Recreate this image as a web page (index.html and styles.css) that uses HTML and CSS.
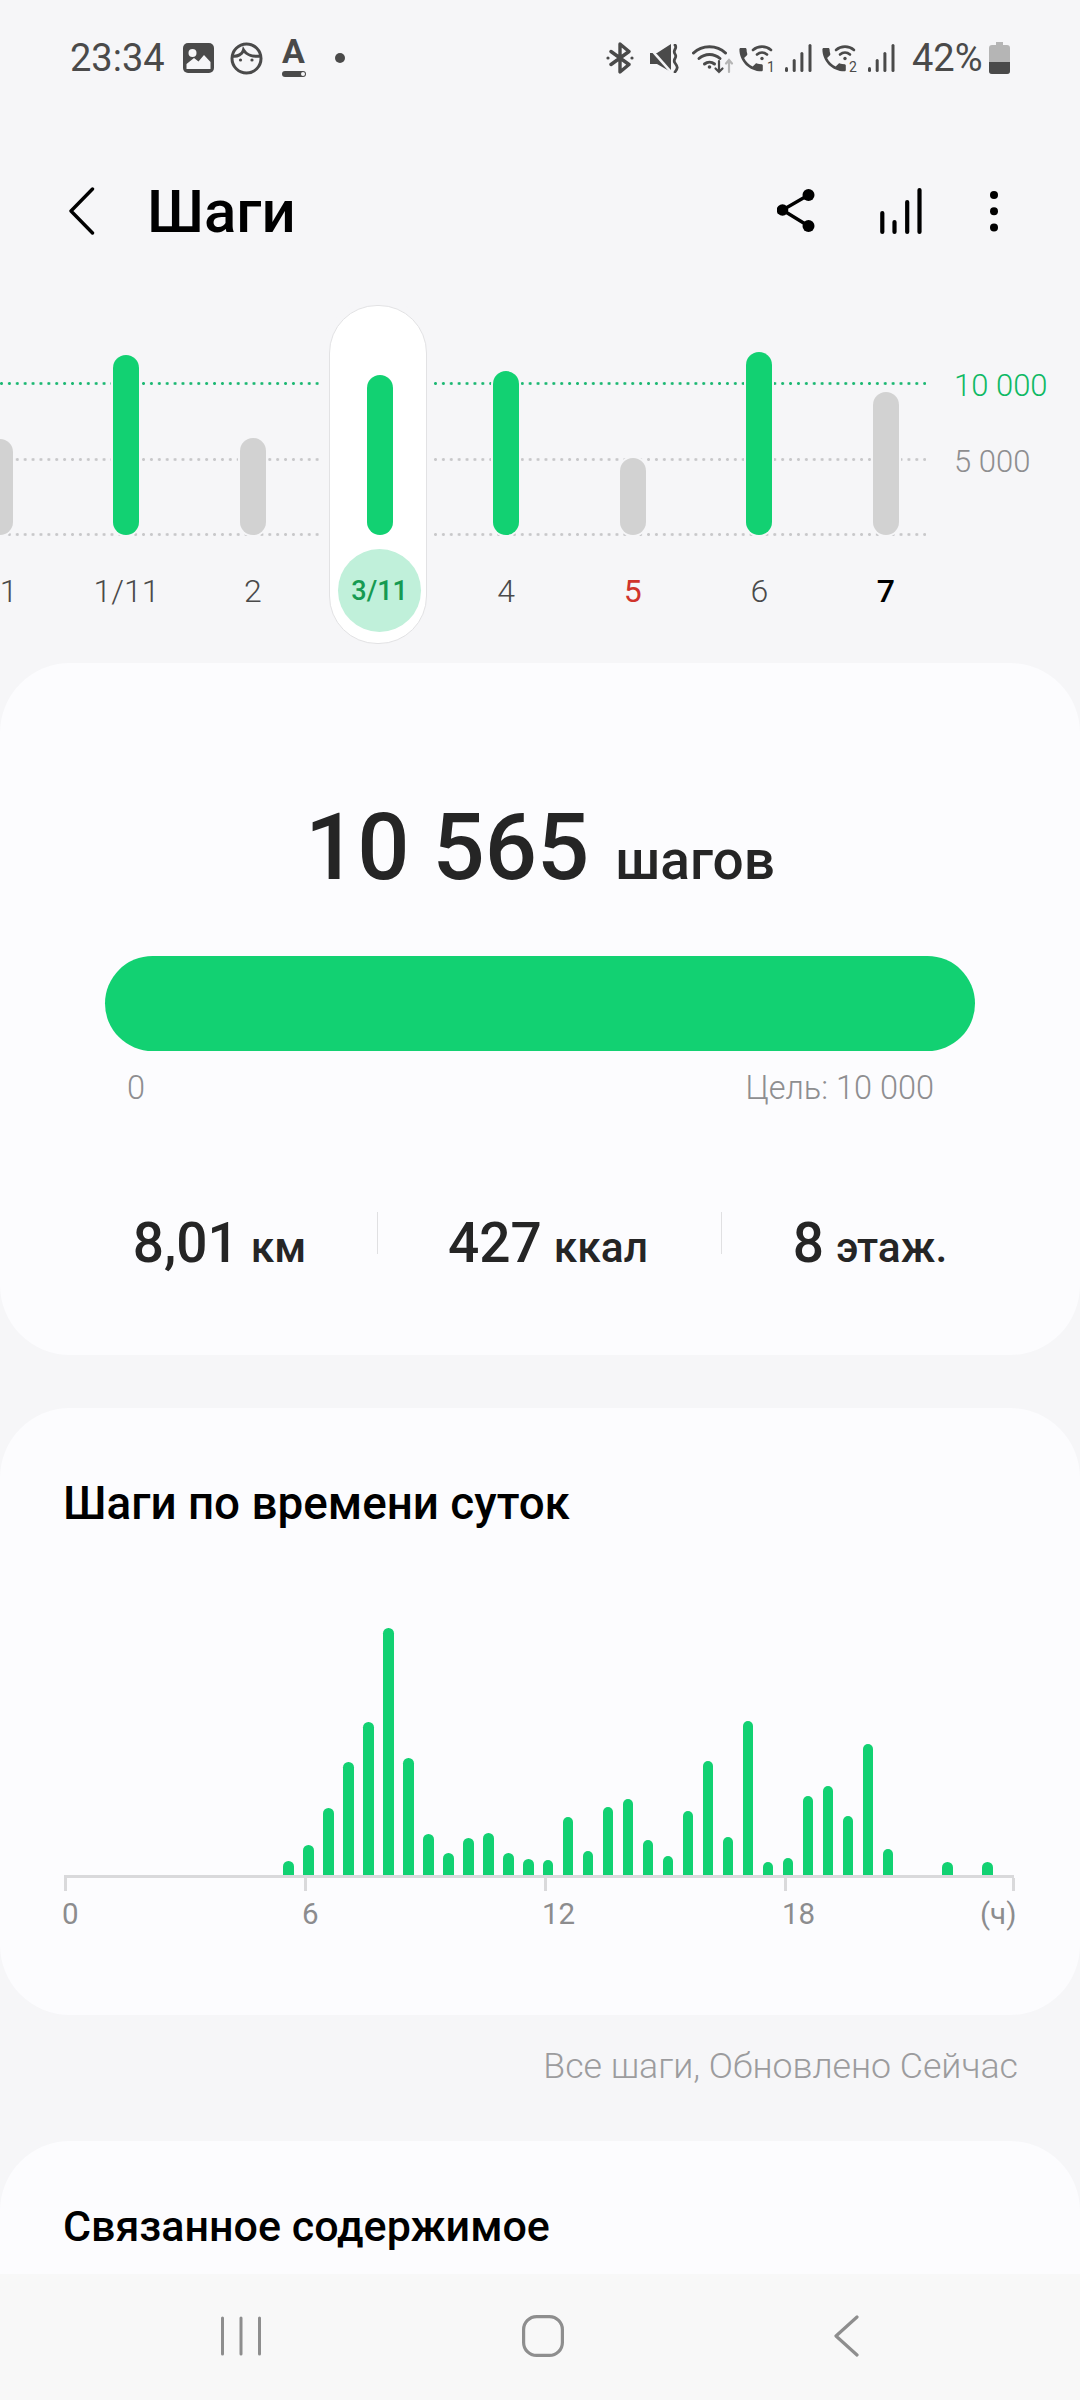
FILE: index.html
```html
<!DOCTYPE html>
<html lang="ru">
<head>
<meta charset="utf-8">
<title>Шаги</title>
<link rel="stylesheet" href="styles.css">
</head>
<body>
<div class="screen">
  <div class="main">
    <div class="status">
      <div class="status-left">
        <span class="time">23:34</span>
        <svg class="ic-img" viewBox="0 0 31 30"><rect width="31" height="30" rx="5" fill="#4a4a4a"/><circle cx="9.5" cy="10" r="4" fill="#f6f6f8"/><path d="M3.5 26v-5L11 15l4.5 3.5L21 12l6.5 7v7z" fill="#f6f6f8"/></svg>
        <svg class="ic-face" viewBox="0 0 33 33" fill="none" stroke="#4a4a4a" stroke-width="3"><circle cx="16.5" cy="16.5" r="14.5"/><path d="M2.5 14c5 1 10-2 11-6 3 5 10 7 17 6"/><circle cx="10.5" cy="18" r="1.6" fill="#4a4a4a" stroke="none"/><circle cx="22" cy="18" r="1.6" fill="#4a4a4a" stroke="none"/></svg>
        <span class="font-ic"><span class="font-a">A</span><span class="font-bar"></span></span>
        <span class="dot"></span>
      </div>
      <div class="status-right">
        <svg class="ic-bt" viewBox="0 0 28 32" fill="none" stroke="#4a4a4a" stroke-width="3.4" stroke-linejoin="round" stroke-linecap="round"><path d="M5 9.500l18 13-9 7.500V2l9 7.500-18 13"/><circle cx="2" cy="16" r="1.600" fill="#4a4a4a" stroke="none"/><circle cx="26" cy="16" r="1.600" fill="#4a4a4a" stroke="none"/></svg>
        <svg class="ic-mute" viewBox="0 0 30 29"><path d="M1 9h7l14-9v28L8 20H1z" fill="#4a4a4a"/><path d="M0 3l23 26" stroke="#f6f6f8" stroke-width="2.600" fill="none"/><path d="M26 1c3 3.500-3 5 0 9s-3 5 0 9 3 5 0 9" stroke="#4a4a4a" stroke-width="2.800" fill="none" stroke-linecap="round"/></svg>
        <svg class="ic-wifi" viewBox="0 0 42 31" fill="none" stroke="#4a4a4a" stroke-width="3" stroke-linecap="round"><path d="M1.500 10C10 1.500 25 1.500 33.500 10"/><path d="M7 15.500c6-5.500 15-5.500 21 0"/><path d="M12.500 21c3-2.500 7-2.500 10 0"/><circle cx="17.500" cy="24" r="1.800" fill="#4a4a4a" stroke="none"/><path d="M27 18v11m-3.500-3.500l3.500 3.500 3.500-3.500" stroke-width="2.200"/><path d="M37 29V17m-3 3.500l3-3.500 3 3.500" stroke="#b5b5b5" stroke-width="2.200"/></svg>
        <svg class="ic-call" viewBox="0 0 36 29"><path transform="translate(-3.500 0) scale(1.300)" fill="#4a4a4a" d="M6.620 10.790c1.440 2.830 3.760 5.140 6.590 6.590l2.200-2.200c.27-.27.67-.36 1.020-.24 1.120.37 2.330.57 3.570.57.55 0 1 .45 1 1V20c0 .55-.45 1-1 1-9.390 0-17-7.610-17-17 0-.55.45-1 1-1h3.500c.55 0 1 .45 1 1 0 1.250.2 2.450.57 3.570.11.35.03.74-.25 1.020l-2.200 2.200z"/><g fill="none" stroke="#4a4a4a" stroke-width="2.600" stroke-linecap="round"><path d="M14 6c5-4.500 13-4.500 18 0"/><path d="M18 10.500c3-2.500 7-2.500 10 0"/></g><circle cx="23" cy="14.500" r="1.700" fill="#4a4a4a"/><text class="sim" x="28" y="28">1</text></svg>
        <svg class="ic-sig" viewBox="0 0 27 28" fill="#4a4a4a"><rect x="0" y="23" width="3" height="5" rx="1.500"/><rect x="7.700" y="15" width="3" height="13" rx="1.500"/><rect x="15.400" y="8" width="3" height="20" rx="1.500"/><rect x="23.500" y="0" width="3" height="28" rx="1.500"/></svg>
        <svg class="ic-call ic-call2" viewBox="0 0 36 29"><path transform="translate(-3.500 0) scale(1.300)" fill="#4a4a4a" d="M6.620 10.790c1.440 2.830 3.760 5.140 6.590 6.590l2.200-2.200c.27-.27.67-.36 1.020-.24 1.120.37 2.330.57 3.570.57.55 0 1 .45 1 1V20c0 .55-.45 1-1 1-9.390 0-17-7.610-17-17 0-.55.45-1 1-1h3.500c.55 0 1 .45 1 1 0 1.250.2 2.450.57 3.570.11.35.03.74-.25 1.020l-2.200 2.200z"/><g fill="none" stroke="#4a4a4a" stroke-width="2.600" stroke-linecap="round"><path d="M14 6c5-4.500 13-4.500 18 0"/><path d="M18 10.500c3-2.500 7-2.500 10 0"/></g><circle cx="23" cy="14.500" r="1.700" fill="#4a4a4a"/><text class="sim" x="27" y="28">2</text></svg>
        <svg class="ic-sig" viewBox="0 0 27 28" fill="#4a4a4a"><rect x="0" y="23" width="3" height="5" rx="1.500"/><rect x="7.700" y="15" width="3" height="13" rx="1.500"/><rect x="15.400" y="8" width="3" height="20" rx="1.500"/><rect x="23.500" y="0" width="3" height="28" rx="1.500"/></svg>
        <span class="batt-text">42%</span>
        <svg class="ic-batt" viewBox="0 0 21 32"><path d="M7 0h7v3h4a3 3 0 0 1 3 3v23a3 3 0 0 1-3 3H3a3 3 0 0 1-3-3V6a3 3 0 0 1 3-3h4z" fill="#b5b5b5"/><path d="M0 20h21v9a3 3 0 0 1-3 3H3a3 3 0 0 1-3-3z" fill="#4a4a4a"/></svg>
      </div>
    </div>

    <header class="appbar">
      <svg class="back" viewBox="0 0 26 48" fill="none" stroke="#000" stroke-width="3.400" stroke-linecap="round" stroke-linejoin="round"><path d="M23.500 2L2 24l21.500 22"/></svg>
      <h1 class="title">Шаги</h1>
      <svg class="ic-share" viewBox="0 0 38 44" fill="#000"><path d="M31.500 6L5.500 21l26 16" fill="none" stroke="#000" stroke-width="3.400"/><circle cx="31.500" cy="6" r="6"/><circle cx="5.500" cy="21" r="5.800"/><circle cx="31.500" cy="37" r="6"/></svg>
      <svg class="ic-stats" viewBox="0 0 42 48" fill="none" stroke="#000" stroke-width="4.200" stroke-linecap="round"><path d="M2.300 45V26M14.500 45V35M27.200 45V15M39.500 45V3"/></svg>
      <svg class="ic-more" viewBox="0 0 10 42" fill="#000"><circle cx="5" cy="5" r="4"/><circle cx="5" cy="21.300" r="4"/><circle cx="5" cy="37.600" r="4"/></svg>
    </header>

    <section class="trend">
      <div class="gridlines">
        <div class="gl gl-goal"><span class="gl-line"></span><span class="gl-label">10 000</span></div>
        <div class="gl"><span class="gl-line"></span><span class="gl-label">5 000</span></div>
        <div class="gl"><span class="gl-line"></span></div>
      </div>
      <div class="days">
        <div class="day"><div class="plot"><i class="dbar off" style="height:96px"></i></div><div class="dlabel">31</div></div>
        <div class="day"><div class="plot"><i class="dbar" style="height:180px"></i></div><div class="dlabel">1/11</div></div>
        <div class="day"><div class="plot"><i class="dbar off" style="height:97px"></i></div><div class="dlabel">2</div></div>
        <div class="day sel"><div class="plot"><i class="dbar" style="height:160px"></i></div><div class="dlabel">3/11</div></div>
        <div class="day"><div class="plot"><i class="dbar" style="height:164px"></i></div><div class="dlabel">4</div></div>
        <div class="day"><div class="plot"><i class="dbar off" style="height:77px"></i></div><div class="dlabel red">5</div></div>
        <div class="day"><div class="plot"><i class="dbar" style="height:183px"></i></div><div class="dlabel">6</div></div>
        <div class="day"><div class="plot"><i class="dbar off" style="height:143px"></i></div><div class="dlabel today">7</div></div>
      </div>
    </section>

    <section class="card card-steps">
      <div class="count"><span class="count-num">10 565</span><span class="count-unit">шагов</span></div>
      <div class="progress"></div>
      <div class="progress-labels"><span>0</span><span>Цель: 10 000</span></div>
      <div class="stats">
        <div class="stat"><b>8,01</b><span>км</span></div>
        <div class="stat stat-div"><b>427</b><span>ккал</span></div>
        <div class="stat stat-div"><b>8</b><span>этаж.</span></div>
      </div>
    </section>

    <section class="card card-hours">
      <h2 class="card-title">Шаги по времени суток</h2>
      <div class="hbars">
        <i style="height:14px"></i><i style="height:30px"></i><i style="height:67px"></i><i style="height:113px"></i><i style="height:153px"></i><i style="height:247px"></i><i style="height:117px"></i><i style="height:41px"></i><i style="height:22px"></i><i style="height:37px"></i><i style="height:42px"></i><i style="height:22px"></i><i style="height:16px"></i><i style="height:15px"></i><i style="height:58px"></i><i style="height:24px"></i><i style="height:68px"></i><i style="height:76px"></i><i style="height:35px"></i><i style="height:19px"></i><i style="height:64px"></i><i style="height:114px"></i><i style="height:38px"></i><i style="height:154px"></i><i style="height:13px"></i><i style="height:17px"></i><i style="height:79px"></i><i style="height:89px"></i><i style="height:59px"></i><i style="height:131px"></i><i style="height:26px"></i><i style="height:0"></i><i style="height:0"></i><i style="height:13px"></i><i style="height:0"></i><i style="height:13px"></i>
      </div>
      <div class="axis"><span class="tick"></span><span class="tick"></span><span class="tick"></span><span class="tick"></span><span class="tick tick-end"></span></div>
      <div class="axis-labels"><span>0</span><span>6</span><span>12</span><span>18</span><span class="unit">(ч)</span></div>
    </section>

    <p class="updated">Все шаги, Обновлено Сейчас</p>

    <section class="card card-related">
      <h2 class="card-title card-title-small">Связанное содержимое</h2>
    </section>
  </div>

  <nav class="navbar">
    <svg class="nav-recent" viewBox="0 0 42 40" fill="none" stroke="#8e8e8e" stroke-width="3" stroke-linecap="round"><path d="M2.500 2v36M21 2v36M39.500 2v36"/></svg>
    <svg class="nav-home" viewBox="0 0 42 42" fill="none" stroke="#8e8e8e" stroke-width="3.200"><rect x="1.600" y="1.600" width="38.800" height="38.800" rx="13"/></svg>
    <svg class="nav-back" viewBox="0 0 25 42" fill="none" stroke="#8e8e8e" stroke-width="3.200" stroke-linecap="round" stroke-linejoin="round"><path d="M23 2L2 21l21 19"/></svg>
  </nav>
</div>
</body>
</html>
```

FILE: styles.css
```css
* { box-sizing: border-box; }
html, body { margin: 0; padding: 0; }
body { width: 1080px; height: 2400px; overflow: hidden; background: #f6f6f8; font-family: Roboto, "Noto Sans", sans-serif; }
.screen { width: 1080px; height: 2400px; display: flex; flex-direction: column; overflow: hidden; }
.main { height: 2274px; overflow: hidden; flex: none; }

/* status bar */
.status { height: 116px; display: flex; align-items: center; justify-content: space-between; padding: 0 70px; color: #4a4a4a; }
.status-left, .status-right { display: flex; align-items: center; }
.time { font-size: 38px; font-weight: 400; width: 113px; }
.ic-img { width: 31px; height: 30px; }
.ic-face { width: 33px; height: 33px; margin-left: 16px; }
.font-ic { width: 25px; margin-left: 18px; display: flex; flex-direction: column; align-items: center; height: 40px; position: relative; top: 1px; }
.font-a { font-size: 34px; font-weight: 700; line-height: 25px; height: 32px; }
.font-bar { width: 24px; height: 6px; background: #4a4a4a; border-radius: 3px; position: relative; }
.font-bar::after { content: ""; position: absolute; right: 1px; top: 1px; width: 4px; height: 4px; border-radius: 50%; background: #f6f6f8; }
.dot { width: 10px; height: 10px; border-radius: 50%; background: #4a4a4a; margin-left: 29px; }
.ic-bt { width: 28px; height: 32px; }
.ic-mute { width: 30px; height: 29px; margin-left: 15px; }
.ic-wifi { width: 42px; height: 31px; margin-left: 13px; }
.ic-call { width: 36px; height: 29px; margin-left: 5px; }
.ic-call2 { margin-left: 10px; }
.sim { font-family: Roboto, sans-serif; font-size: 14px; fill: #4a4a4a; }
.ic-sig { width: 27px; height: 28px; margin-left: 10px; }
.batt-text { font-size: 38px; font-weight: 400; margin-left: 17px; width: 77px; white-space: nowrap; }
.ic-batt { width: 21px; height: 32px; }

/* app bar */
.appbar { height: 189px; display: flex; align-items: center; padding: 0 0 0 69px; }
.back { width: 26px; height: 48px; }
.title { margin: 2px 0 0 52px; font-size: 60px; font-weight: 500; color: #000; flex: 1; line-height: 1; }
.ic-share { width: 38px; height: 44px; margin-right: 65px; }
.ic-stats { width: 42px; height: 48px; margin-right: 67px; }
.ic-more { width: 10px; height: 42px; margin-right: 81px; }

/* daily trend */
.trend { height: 358px; position: relative; overflow: hidden; }
.gridlines { position: absolute; left: 0; top: 77px; width: 1080px; height: 154px; display: flex; flex-direction: column; justify-content: space-between; }
.gl { height: 3px; display: flex; align-items: center; color: #8e8e90; }
.gl-line { width: 926px; height: 3px; flex: none; background: radial-gradient(circle at 1.5px 1.5px, #c8c8ca 1.2px, transparent 1.7px) 0 0 / 7.900px 3px repeat-x; }
.gl-label { font-size: 31px; margin: 4px 0 0 28px; font-weight: 300; white-space: nowrap; }
.gl-goal { color: #0fb964; }
.gl-goal .gl-line { background: radial-gradient(circle at 1.5px 1.5px, #1cb873 1.2px, transparent 1.7px) 0 0 / 7.900px 3px repeat-x; }
.days { position: relative; display: flex; height: 337px; margin-left: -63.500px; }
.day { width: 126.6px; flex: none; height: 337px; display: flex; flex-direction: column; align-items: center; }
.plot { height: 230px; display: flex; align-items: flex-end; flex: none; }
.dbar { display: block; width: 26px; border-radius: 13px; background: #12d172; box-shadow: 0 0 0 2px #f6f6f8; }
.dbar.off { background: #d2d2d2; }
.dlabel { margin-top: 14px; width: 83px; height: 83px; display: flex; align-items: center; justify-content: center; border-radius: 50%; font-size: 32px; font-weight: 300; color: #4a4a4a; }
.dlabel.red { color: #d0342c; font-weight: 400; }
.dlabel.today { color: #000; font-weight: 500; }
.sel { position: relative; }
.sel::before { content: ""; position: absolute; left: 13.200px; width: 96px; top: 0; height: 337px; background: #fff; border: 1px solid #e2e2e4; border-radius: 48px; box-shadow: 0 0 0 6px #f6f6f8; }
.sel .plot, .sel .dlabel { position: relative; }
.sel .dbar { box-shadow: none; }
.sel .dlabel { background: #c0f0da; color: #169a52; font-size: 27px; font-weight: 500; }

/* cards */
.card { background: #fcfcfe; border-radius: 70px; }
.card-steps { height: 692px; padding-top: 135px; }
.count { display: flex; justify-content: center; align-items: baseline; line-height: 100px; color: #252525; height: 106px; }
.count-num { font-size: 92px; font-weight: 500; }
.count-unit { font-size: 55px; font-weight: 500; margin-left: 26px; }
.progress { margin: 52px 105px 0; height: 95px; border-radius: 47.500px; background: #12d172; }
.progress-labels { display: flex; justify-content: space-between; margin: 18px 146px 0 127px; font-size: 32.500px; font-weight: 300; color: #8e8e90; line-height: 38px; }
.stats { display: grid; grid-template-columns: 315px 344px 300px; margin: 105px 0 0 62px; height: 42px; }
.stat { display: flex; justify-content: center; align-items: baseline; color: #252525; height: 42px; line-height: 42px; padding-top: 10px; }
.stat b { font-size: 55px; font-weight: 500; }
.stat span { font-size: 42.500px; font-weight: 500; margin-left: 12px; }
.stat-div { border-left: 1.500px solid #e0e0e2; padding-right: 3px; }

.card-hours { height: 607px; margin-top: 53px; padding-top: 71px; }
.card-title { margin: 0 0 0 63px; font-size: 45.800px; font-weight: 500; color: #000; line-height: 50px; }
.card-title-small { font-size: 43px; }
.hbars { display: flex; align-items: flex-end; height: 250px; margin: 96px 0 0 283px; gap: 9.300px; }
.hbars i { display: block; width: 10.700px; border-radius: 5.350px 5.350px 0 0; background: #12d172; flex: none; }
.axis { margin: 0 0 0 64px; width: 950px; height: 16px; border-top: 3px solid #d9d9db; display: flex; justify-content: flex-start; }
.tick { width: 3px; height: 13px; background: #d9d9db; margin-right: 237px; flex: none; }
.tick-end { margin-right: 0; margin-left: -12px; }
.axis-labels { display: flex; margin: 3px 0 0 62px; font-size: 29.500px; color: #8c8c8e; line-height: 40px; }
.axis-labels span { width: 240px; flex: none; }
.axis-labels .unit { width: auto; margin-left: -42px; }

.updated { margin: 31px 62px 0 0; text-align: right; font-size: 35.700px; font-weight: 300; color: #9c9c9e; line-height: 40px; }

.card-related { height: 200px; margin-top: 55px; padding-top: 60px; border-radius: 70px 70px 0 0; }

/* nav */
.navbar { height: 126px; background: #f8f8f8; display: flex; align-items: center; flex: none; padding-bottom: 2px; }
.nav-recent { width: 42px; height: 40px; margin-left: 220px; }
.nav-home { width: 42px; height: 42px; margin-left: 260px; }
.nav-back { width: 25px; height: 42px; margin-left: 270px; }
```
